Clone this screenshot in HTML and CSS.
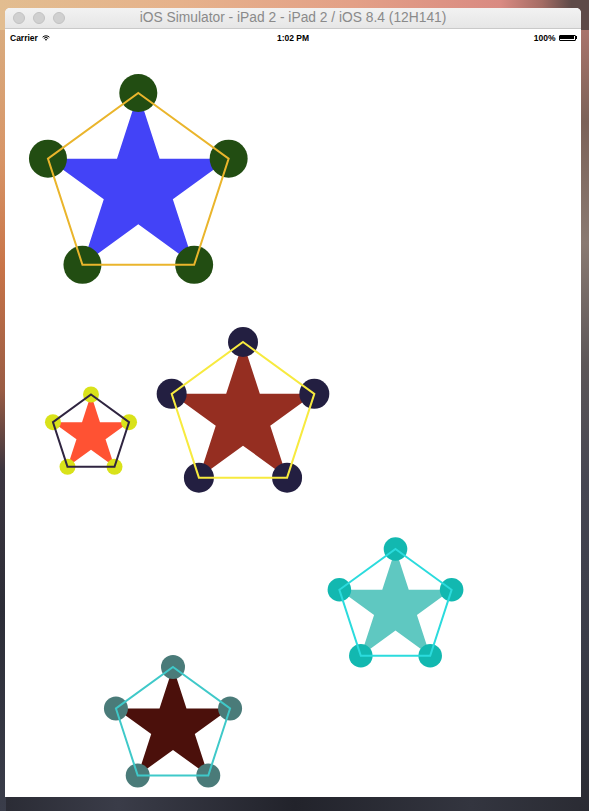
FILE: index.html
```html
<!DOCTYPE html>
<html>
<head>
<meta charset="utf-8">
<title>iOS Simulator</title>
<link rel="stylesheet" href="styles.css">
</head>
<body>
<div class="window">
  <div class="titlebar">
    <div class="lights">
      <span class="light"></span>
      <span class="light"></span>
      <span class="light"></span>
    </div>
    <div class="title">iOS Simulator - iPad 2 - iPad 2 / iOS 8.4 (12H141)</div>
    <div></div>
  </div>
  <div class="screen">
    <div class="statusbar">
      <div class="sb-left">
        <span>Carrier</span>
        <svg class="wifi" viewBox="0 0 12 9" width="8" height="6">
          <path class="wifi-dot" d="M6 8.6 L4.2 6.8 A2.5 2.5 0 0 1 7.8 6.8 Z"/>
          <path class="wifi-arc" d="M2.7 5.2 A4.7 4.7 0 0 1 9.3 5.2"/>
          <path class="wifi-arc" d="M0.9 3.3 A7.3 7.3 0 0 1 11.1 3.3"/>
        </svg>
      </div>
      <div class="sb-center">1:02 PM</div>
      <div class="sb-right">
        <span>100%</span>
        <span class="battery"><span class="battery-fill"></span></span>
        <span class="battery-nub"></span>
      </div>
    </div>
    <svg class="canvas" viewBox="5 46 576 751" width="576" height="751">
      <g class="star s1" transform="translate(138.3 188) scale(95)">
        <polygon class="body" points="0,-1 0.2245,-0.309 0.9511,-0.309 0.3633,0.118 0.5878,0.809 0,0.382 -0.5878,0.809 -0.3633,0.118 -0.9511,-0.309 -0.2245,-0.309"/>
        <circle cx="0" cy="-1" r="0.2"/>
        <circle cx="0.9511" cy="-0.309" r="0.2"/>
        <circle cx="0.5878" cy="0.809" r="0.2"/>
        <circle cx="-0.5878" cy="0.809" r="0.2"/>
        <circle cx="-0.9511" cy="-0.309" r="0.2"/>
        <polygon class="outline" points="0,-1 0.9511,-0.309 0.5878,0.809 -0.5878,0.809 -0.9511,-0.309"/>
      </g>
      <g class="star s2" transform="translate(91 434.5) scale(40)">
        <polygon class="body" points="0,-1 0.2245,-0.309 0.9511,-0.309 0.3633,0.118 0.5878,0.809 0,0.382 -0.5878,0.809 -0.3633,0.118 -0.9511,-0.309 -0.2245,-0.309"/>
        <circle cx="0" cy="-1" r="0.2"/>
        <circle cx="0.9511" cy="-0.309" r="0.2"/>
        <circle cx="0.5878" cy="0.809" r="0.2"/>
        <circle cx="-0.5878" cy="0.809" r="0.2"/>
        <circle cx="-0.9511" cy="-0.309" r="0.2"/>
        <polygon class="outline" points="0,-1 0.9511,-0.309 0.5878,0.809 -0.5878,0.809 -0.9511,-0.309"/>
      </g>
      <g class="star s3" transform="translate(243 417) scale(75)">
        <polygon class="body" points="0,-1 0.2245,-0.309 0.9511,-0.309 0.3633,0.118 0.5878,0.809 0,0.382 -0.5878,0.809 -0.3633,0.118 -0.9511,-0.309 -0.2245,-0.309"/>
        <circle cx="0" cy="-1" r="0.2"/>
        <circle cx="0.9511" cy="-0.309" r="0.2"/>
        <circle cx="0.5878" cy="0.809" r="0.2"/>
        <circle cx="-0.5878" cy="0.809" r="0.2"/>
        <circle cx="-0.9511" cy="-0.309" r="0.2"/>
        <polygon class="outline" points="0,-1 0.9511,-0.309 0.5878,0.809 -0.5878,0.809 -0.9511,-0.309"/>
      </g>
      <g class="star s4" transform="translate(395.5 608) scale(59)">
        <polygon class="body" points="0,-1 0.2245,-0.309 0.9511,-0.309 0.3633,0.118 0.5878,0.809 0,0.382 -0.5878,0.809 -0.3633,0.118 -0.9511,-0.309 -0.2245,-0.309"/>
        <circle cx="0" cy="-1" r="0.2"/>
        <circle cx="0.9511" cy="-0.309" r="0.2"/>
        <circle cx="0.5878" cy="0.809" r="0.2"/>
        <circle cx="-0.5878" cy="0.809" r="0.2"/>
        <circle cx="-0.9511" cy="-0.309" r="0.2"/>
        <polygon class="outline" points="0,-1 0.9511,-0.309 0.5878,0.809 -0.5878,0.809 -0.9511,-0.309"/>
      </g>
      <g class="star s5" transform="translate(173 727) scale(60)">
        <polygon class="body" points="0,-1 0.2245,-0.309 0.9511,-0.309 0.3633,0.118 0.5878,0.809 0,0.382 -0.5878,0.809 -0.3633,0.118 -0.9511,-0.309 -0.2245,-0.309"/>
        <circle cx="0" cy="-1" r="0.2"/>
        <circle cx="0.9511" cy="-0.309" r="0.2"/>
        <circle cx="0.5878" cy="0.809" r="0.2"/>
        <circle cx="-0.5878" cy="0.809" r="0.2"/>
        <circle cx="-0.9511" cy="-0.309" r="0.2"/>
        <polygon class="outline" points="0,-1 0.9511,-0.309 0.5878,0.809 -0.5878,0.809 -0.9511,-0.309"/>
      </g>
    </svg>
  </div>
</div>
</body>
</html>
```

FILE: styles.css
```css
html, body {
  margin: 0;
  padding: 0;
  width: 589px;
  height: 811px;
  overflow: hidden;
}

body {
  box-sizing: border-box;
  padding: 8px 0 0 5px;
  font-family: "Liberation Sans", Arial, sans-serif;
  background:
    linear-gradient(to right, #e2bd90 0%, #e6b28b 30%, #e3a087 60%, #d98a82 85%, #a46c64 92%, #5e4a48 97%) top left / 100% 30px no-repeat,
    linear-gradient(to bottom, #dab184 0%, #d79466 20%, #c87448 33%, #9a5c44 48%, #3c3640 58%, #2c2d37 75%, #3a3d4a 100%) left top / 6px 100% no-repeat,
    linear-gradient(to bottom, #b87a72 0%, #7c6258 15%, #8a7a72 30%, #5c5658 45%, #464652 60%, #3a3c48 80%, #2a2b33 100%) right top / 10px 100% no-repeat,
    linear-gradient(to right, #2a2b34, #3a3c48 20%, #22232b 50%, #33353f 80%, #2a2b33);
}

.window {
  width: 576px;
  height: 789px;
  display: flex;
  flex-direction: column;
  border-radius: 5px 5px 0 0;
  overflow: hidden;
  background: #ffffff;
}

.titlebar {
  height: 20px;
  flex: none;
  display: grid;
  grid-template-columns: 1fr auto 1fr;
  align-items: center;
  background: linear-gradient(to bottom, #f2f2f2, #e6e6e6);
  border-bottom: 1px solid #c9c9c9;
}

.lights {
  display: flex;
  gap: 8px;
  padding-left: 8px;
}

.light {
  width: 12px;
  height: 12px;
  border-radius: 50%;
  box-sizing: border-box;
  background: #d0d0d0;
  border: 0.5px solid #c2c2c2;
}

.title {
  font-size: 13.8px;
  color: #8a8a8a;
  white-space: nowrap;
  line-height: 20px;
}

.screen {
  flex: 1;
  display: flex;
  flex-direction: column;
  background: #ffffff;
}

.statusbar {
  height: 17px;
  flex: none;
  display: grid;
  grid-template-columns: 1fr auto 1fr;
  align-items: center;
  font-size: 8.5px;
  font-weight: bold;
  color: #000000;
}

.sb-left {
  display: flex;
  align-items: center;
  gap: 4px;
  padding-left: 5px;
}

.wifi {
  display: block;
}

.wifi-dot {
  fill: #000000;
}

.wifi-arc {
  fill: none;
  stroke: #000000;
  stroke-width: 1.5;
}

.sb-center {
  text-align: center;
}

.sb-right {
  display: flex;
  align-items: center;
  justify-content: flex-end;
  padding-right: 4px;
}

.battery {
  margin-left: 3px;
  width: 17px;
  height: 6px;
  box-sizing: border-box;
  border: 1px solid #000000;
  border-radius: 1px;
  padding: 0.5px;
  display: flex;
}

.battery-fill {
  flex: 1;
  background: #000000;
}

.battery-nub {
  width: 1.5px;
  height: 3px;
  background: #000000;
}

.canvas {
  display: block;
  flex: none;
}

.star .outline {
  fill: none;
  stroke-width: 2;
  stroke-linejoin: miter;
  vector-effect: non-scaling-stroke;
}

.s1 .body { fill: #4343f7; }
.s1 circle { fill: #224d12; }
.s1 .outline { stroke: #eab52c; }

.s2 .body { fill: #ff5233; }
.s2 circle { fill: #d9e21a; }
.s2 .outline { stroke: #2f2440; }

.s3 .body { fill: #952e21; }
.s3 circle { fill: #231f41; }
.s3 .outline { stroke: #f7ea3f; }

.s4 .body { fill: #5fc8c1; }
.s4 circle { fill: #12b8b0; }
.s4 .outline { stroke: #2bdbdd; }

.s5 .body { fill: #4b100b; }
.s5 circle { fill: #4a7b79; }
.s5 .outline { stroke: #3fc9c9; }
```
